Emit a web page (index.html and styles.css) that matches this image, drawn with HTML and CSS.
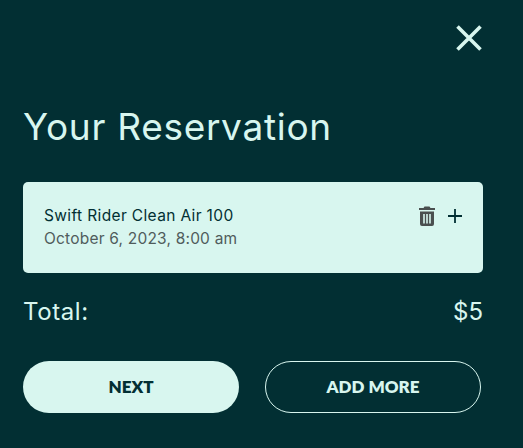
FILE: index.html
```html
<!DOCTYPE html>
<html lang="en">
<head>
    <meta charset="UTF-8">
    <meta name="viewport" content="width=device-width, initial-scale=1.0">
    <title>Your Reservation</title>
    <link rel="stylesheet" href="styles.css">
</head>
<body>
    <div class="panel">
        <div class="close-row">
            <button class="close-btn" aria-label="Close">
                <svg width="28" height="28" viewBox="0 0 28 28"><path d="M2.5 2.5L25.5 25.5M25.5 2.5L2.5 25.5" stroke="#d8f6ef" stroke-width="3.6" fill="none"/></svg>
            </button>
        </div>

        <h1>Your Reservation</h1>

        <div class="item-card">
            <div class="item-text">
                <p class="item-name">Swift Rider Clean Air 100</p>
                <p class="item-date">October 6, 2023, 8:00 am</p>
            </div>
            <div class="item-icons">
                <svg width="18" height="20" viewBox="0 0 18 20"><path fill="#4a4f4f" d="M6.5 0.5h5l1 1.5H17v2H1V2h4.5zM2 5.5h14V18a2 2 0 0 1-2 2H4a2 2 0 0 1-2-2zM5.2 8v9.5h1.6V8zM8.2 8v9.5h1.6V8zM11.2 8v9.5h1.6V8z" fill-rule="evenodd"/></svg>
                <svg width="14" height="14" viewBox="0 0 14 14"><path d="M7 0V14M0 7H14" stroke="#022f33" stroke-width="1.8" fill="none"/></svg>
            </div>
        </div>

        <div class="total-row">
            <span class="total-label">Total:</span>
            <span>$5</span>
        </div>

        <div class="actions">
            <button class="btn btn-next">NEXT</button>
            <button class="btn btn-more">ADD MORE</button>
        </div>
    </div>
</body>
</html>
```

FILE: styles.css
```css
body {
    margin: 0;
    background: #022f33;
    font-family: 'Inter', 'Open Sans', sans-serif;
    color: #d8f6ef;
}

.panel {
    width: 523px;
    height: 448px;
    padding: 24px 40px 0 23px;
    box-sizing: border-box;
}

.close-row {
    display: flex;
    justify-content: flex-end;
}

.close-btn {
    padding: 0;
    background: none;
    border: none;
    height: 28px;
    cursor: pointer;
}

h1 {
    margin: 47px 0 0;
    font-size: 37px;
    font-weight: 400;
    line-height: 55px;
    letter-spacing: 0.7px;
}

.item-card {
    display: flex;
    justify-content: space-between;
    margin-top: 28px;
    padding: 23px 21px 0;
    height: 91px;
    box-sizing: border-box;
    background: #d8f6ef;
    border-radius: 5px;
    color: #022f33;
}

.item-text p {
    margin: 0;
}

.item-name {
    font-size: 15.5px;
    line-height: 21px;
    letter-spacing: 0.36px;
}

.item-date {
    margin-top: 2px !important;
    font-size: 15.5px;
    line-height: 21px;
    letter-spacing: 0.2px;
    color: #505c5c;
}

.item-icons {
    display: flex;
    align-items: center;
    gap: 12px;
    height: 21px;
}

.total-row {
    display: flex;
    justify-content: space-between;
    margin-top: 22px;
    font-size: 24px;
    line-height: 34px;
}

.total-label {
    letter-spacing: 0.6px;
}

.actions {
    display: flex;
    gap: 26px;
    margin-top: 32px;
}

.btn {
    width: 216px;
    height: 52px;
    padding-bottom: 3px;
    border-radius: 26px;
    font-family: 'Lato', sans-serif;
    font-size: 17px;
    font-weight: 800;
    box-sizing: border-box;
    cursor: pointer;
}

.btn-next {
    background: #d8f6ef;
    color: #022f33;
    border: none;
}

.btn-more {
    background: transparent;
    color: #d8f6ef;
    border: 1px solid #d8f6ef;
}
```
